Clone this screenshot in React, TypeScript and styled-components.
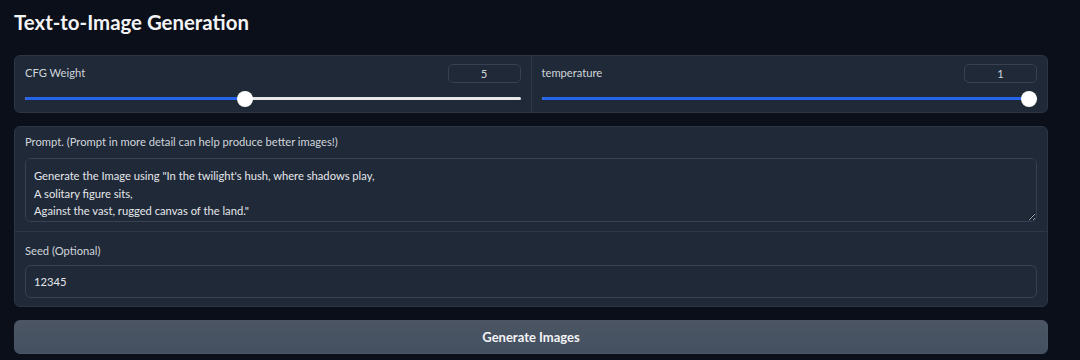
import React, { useState } from 'react';
import styled, { createGlobalStyle } from 'styled-components';

const GlobalStyle = createGlobalStyle`
  html, body {
    margin: 0;
    padding: 0;
    background: #0b0f19;
    font-family: Lato, "Noto Sans", sans-serif;
    color: #e5e7eb;
  }
  * { box-sizing: border-box; }
`;

const Page = styled.div`
  width: 1080px;
  height: 360px;
  padding: 8px 32px 0 14px;
  display: flex;
  flex-direction: column;
  overflow: hidden;
`;

const Title = styled.h1`
  margin: 0 0 19px;
  font-size: 20.4px;
  font-weight: 700;
  line-height: 28px;
  color: #f3f4f6;
`;

const Panel = styled.div<{ $row?: boolean }>`
  background: #1f2937;
  border: 1px solid #2b3544;
  border-radius: 6px;
  display: flex;
  flex-direction: ${p => (p.$row ? 'row' : 'column')};
  margin-bottom: 13px;
  overflow: hidden;
`;

const SliderBlock = styled.div`
  flex: 1;
  padding: 7px 10px 8px;
  & + & {
    border-left: 1px solid #2d3746;
  }
`;

const SliderHead = styled.div`
  display: flex;
  justify-content: space-between;
  align-items: center;
  height: 20px;
`;

const Label = styled.span`
  font-size: 11.2px;
  color: #d1d5db;
  margin-top: -2px;
`;

const NumberBox = styled.div`
  width: 73px;
  height: 19px;
  border: 1px solid #374151;
  border-radius: 5px;
  font-size: 11.2px;
  color: #d1d5db;
  display: flex;
  align-items: center;
  justify-content: center;
`;

const Track = styled.div`
  position: relative;
  height: 3px;
  margin: 14px 0 4px;
  background: #e5e7eb;
  border-radius: 2px;
`;

const Fill = styled.div`
  height: 100%;
  background: #2563eb;
  border-radius: 2px;
`;

const Thumb = styled.div`
  position: absolute;
  top: 50%;
  width: 16px;
  height: 16px;
  margin-left: -8px;
  margin-top: -8px;
  border-radius: 50%;
  background: #ffffff;
`;

const Section = styled.div<{ $top: number; $bottom: number }>`
  padding: ${p => p.$top}px 10px ${p => p.$bottom}px;
  & + & {
    border-top: 1px solid #2d3746;
  }
`;

const FieldLabel = styled.div<{ $gap: number }>`
  font-size: 11.2px;
  color: #d1d5db;
  line-height: 16px;
  margin-bottom: ${p => p.$gap}px;
`;

const TextArea = styled.textarea`
  display: block;
  width: 100%;
  height: 64px;
  background: #1f2937;
  border: 1px solid #374151;
  border-radius: 6px;
  color: #e5e7eb;
  font-family: Lato, "Noto Sans", sans-serif;
  font-size: 11.2px;
  line-height: 17.5px;
  padding: 8px 8px 4px;
  resize: vertical;
  outline: none;
`;

const Input = styled.input`
  display: block;
  width: 100%;
  height: 33px;
  background: #1f2937;
  border: 1px solid #374151;
  border-radius: 6px;
  color: #e5e7eb;
  font-family: Lato, "Noto Sans", sans-serif;
  font-size: 11.2px;
  padding: 0 8px;
  outline: none;
`;

const Button = styled.button`
  height: 34px;
  width: 100%;
  border: 1px solid #4b5563;
  border-radius: 6px;
  background: linear-gradient(to bottom, #4b5563, #445061);
  color: #f3f4f6;
  font-family: Lato, "Noto Sans", sans-serif;
  font-size: 13px;
  font-weight: 700;
  cursor: pointer;
`;

const Slider = ({ label, value, pct }: { label: string; value: string; pct: number }) => (
  <SliderBlock>
    <SliderHead>
      <Label>{label}</Label>
      <NumberBox>{value}</NumberBox>
    </SliderHead>
    <Track>
      <Fill style={{ width: `${pct}%` }} />
      <Thumb style={{ left: `${pct}%` }} />
    </Track>
  </SliderBlock>
);

const App = () => {
  const [prompt, setPrompt] = useState(
    'Generate the Image using "In the twilight\'s hush, where shadows play,\nA solitary figure sits,\nAgainst the vast, rugged canvas of the land."'
  );
  const [seed, setSeed] = useState('12345');

  return (
    <Page>
      <GlobalStyle />
      <Title>Text-to-Image Generation</Title>
      <Panel $row>
        <Slider label="CFG Weight" value="5" pct={44.4} />
        <Slider label="temperature" value="1" pct={98.4} />
      </Panel>
      <Panel>
        <Section $top={7} $bottom={9}>
          <FieldLabel $gap={8}>Prompt. (Prompt in more detail can help produce better images!)</FieldLabel>
          <TextArea value={prompt} onChange={e => setPrompt(e.target.value)} />
        </Section>
        <Section $top={11} $bottom={8}>
          <FieldLabel $gap={6}>Seed (Optional)</FieldLabel>
          <Input value={seed} onChange={e => setSeed(e.target.value)} />
        </Section>
      </Panel>
      <Button>Generate Images</Button>
    </Page>
  );
};

export default App;
